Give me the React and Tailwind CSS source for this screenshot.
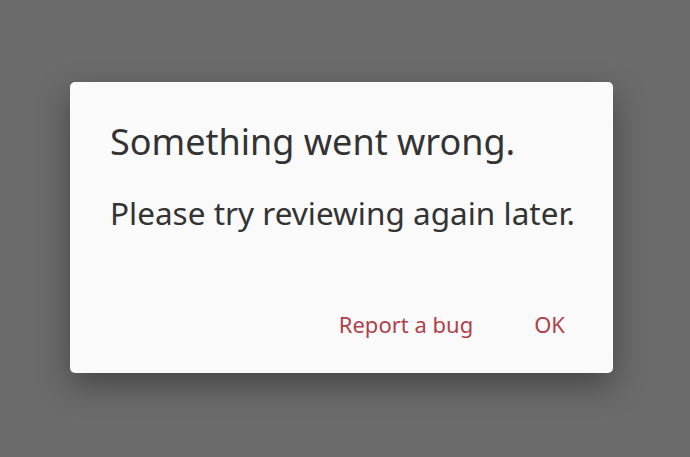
export default function App() {
  return (
    <div className="w-[690px] h-[457px] bg-[#6b6b6b] flex items-start justify-start pl-[70px] pt-[82px] overflow-hidden" style={{fontFamily: '"Noto Sans", sans-serif'}}>
      <div className="w-[543px] h-[291px] bg-[#fafafa] rounded-[5px] shadow-[0_12px_32px_rgba(0,0,0,0.35)] flex flex-col pl-[40px] pr-[48px] pt-[37px]">
        <h1 className="text-[36px] leading-[46px] text-[#333333] whitespace-nowrap">Something went wrong.</h1>
        <p className="mt-[28px] text-[31.5px] leading-[40px] text-[#333333] whitespace-nowrap">Please try reviewing again later.</p>
        <div className="mt-auto mb-[32px] flex justify-end items-center gap-[61px] text-[22px] leading-[33px] text-[#b0414a]">
          <span>Report a bug</span>
          <span>OK</span>
        </div>
      </div>
    </div>
  );
}
